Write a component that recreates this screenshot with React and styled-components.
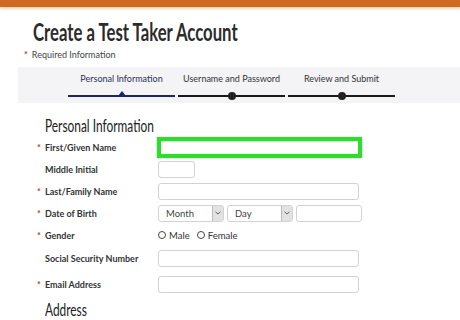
import React from "react";
import styled, { createGlobalStyle } from "styled-components";

const Global = createGlobalStyle`
  html, body { margin: 0; padding: 0; background: #fff; overflow: hidden; }
  body { width: 460px; height: 320px; font-family: Lato, "Open Sans", sans-serif; color: #333; }
`;

const Page = styled.div`
  width: 460px;
  height: 320px;
  overflow: hidden;
  display: flex;
  flex-direction: column;
`;

const TopBar = styled.div`
  height: 7px;
  background: #cf6a22;
  flex: none;
  box-shadow: 0 2px 3px #f6d9c3;
`;

const Header = styled.header`
  padding: 11px 0 0 33px;
`;

const Condensed = styled.span`
  display: inline-block;
  white-space: nowrap;
  transform: scaleX(${(p) => p.$sx});
  transform-origin: left center;
`;

const Title = styled.h1`
  margin: 0;
  font-family: Lato, "Open Sans", sans-serif;
  font-weight: 700;
  font-size: 24px;
  line-height: 28px;
  color: #2b2b2b;
`;

const Required = styled.div`
  margin: 3px 0 0 -9px;
  font-size: 9px;
  line-height: 12px;
  color: #444;
  display: flex;
  gap: 4px;
`;

const Star = styled.span`
  color: #b03a3a;
  font-weight: 700;
`;

const Stepper = styled.nav`
  margin: 6px 0 0 18px;
  height: 36px;
  background: #f4f4f6;
  display: flex;
  gap: 3px;
  padding-left: 50px;
`;

const Step = styled.div`
  width: 107px;
  display: flex;
  flex-direction: column;
  align-items: center;
`;

const StepLabel = styled.div`
  margin-top: 6px;
  height: 12px;
  font-size: 9px;
  line-height: 12px;
  white-space: nowrap;
  color: ${(p) => (p.$active ? "#2d2d5e" : "#333")};
`;

const StepLine = styled.div`
  position: relative;
  margin-top: 10px;
  width: 100%;
  height: 2px;
  background: ${(p) => (p.$active ? "#1e2466" : "#1a1a1a")};
`;

const Dot = styled.span`
  position: absolute;
  left: 50%;
  top: 50%;
  width: 8px;
  height: 8px;
  margin: -4px 0 0 -4px;
  border-radius: 50%;
  background: #222;
`;

const Tri = styled.span`
  position: absolute;
  left: 50%;
  bottom: 1px;
  margin-left: -4px;
  width: 0;
  height: 0;
  border-left: 4px solid transparent;
  border-right: 4px solid transparent;
  border-bottom: 5px solid #1e2466;
`;

const Form = styled.section`
  padding: 13px 0 0 35px;
  display: flex;
  flex-direction: column;
`;

const SectionTitle = styled.h2`
  margin: ${(p) => p.$mt || 0}px 0 0 10px;
  font-family: Lato, "Open Sans", sans-serif;
  font-weight: 400;
  font-size: 17.5px;
  line-height: 20px;
  color: #222;
`;

const Row = styled.div`
  display: grid;
  grid-template-columns: 10px 113px 1fr;
  align-items: center;
  height: ${(p) => p.$h || 22}px;
`;

const Label = styled.label`
  font-size: 9px;
  font-weight: 700;
  color: #333;
  white-space: nowrap;
`;

const RowStar = styled.span`
  color: #b03a3a;
  font-size: 9px;
  font-weight: 700;
  padding-left: 2px;
`;

const Input = styled.div`
  box-sizing: border-box;
  width: ${(p) => p.$w}px;
  height: 17px;
  border: 1px solid #d2d2d2;
  border-radius: 3px;
  background: #fff;
`;

const Focused = styled.div`
  box-sizing: border-box;
  width: 205px;
  height: 21px;
  margin-left: -1px;
  border: 4px solid #2fdc2f;
  box-shadow: 0 0 2px #7ef07e;
  background: #fff;
`;

const Controls = styled.div`
  display: flex;
  gap: 3px;
  align-items: center;
`;

const Select = styled.div`
  box-sizing: border-box;
  width: 66px;
  height: 17px;
  border: 1px solid #d2d2d2;
  border-radius: 3px;
  display: flex;
  align-items: stretch;
  font-size: 9.5px;
  color: #444;
`;

const SelectText = styled.span`
  flex: 1;
  padding-left: 7px;
  line-height: 15px;
`;

const Arrow = styled.span`
  width: 10px;
  background: #e2e2e2;
  border-left: 1px solid #bcbcbc;
  display: flex;
  align-items: center;
  justify-content: center;
`;

const Radios = styled.div`
  display: flex;
  align-items: center;
  gap: 7px;
  font-size: 9.5px;
  color: #333;
`;

const Radio = styled.span`
  display: flex;
  align-items: center;
  gap: 3px;
`;

const Circle = styled.span`
  box-sizing: border-box;
  width: 8px;
  height: 8px;
  border: 1px solid #444;
  border-radius: 50%;
`;

const Chevron = () => (
  <svg width="6" height="4" viewBox="0 0 6 4">
    <path d="M0.5 0.8 L3 3 L5.5 0.8" fill="none" stroke="#555" strokeWidth="0.9" />
  </svg>
);

const Field = ({ req, label, h, children }) => (
  <Row $h={h}>
    {req ? <RowStar>*</RowStar> : <span />}
    <Label>{label}</Label>
    {children}
  </Row>
);

export default function App() {
  return (
    <Page>
      <Global />
      <TopBar />
      <Header>
        <Title>
          <Condensed $sx={0.696}>Create a Test Taker Account</Condensed>
        </Title>
        <Required>
          <Star>*</Star>
          <span>Required Information</span>
        </Required>
      </Header>
      <Stepper>
        <Step>
          <StepLabel $active>Personal Information</StepLabel>
          <StepLine $active>
            <Tri />
          </StepLine>
        </Step>
        <Step>
          <StepLabel>Username and Password</StepLabel>
          <StepLine>
            <Dot />
          </StepLine>
        </Step>
        <Step>
          <StepLabel>Review and Submit</StepLabel>
          <StepLine>
            <Dot />
          </StepLine>
        </Step>
      </Stepper>
      <Form>
        <SectionTitle>
          <Condensed $sx={0.68}>Personal Information</Condensed>
        </SectionTitle>
        <Field req label="First/Given Name">
          <Focused />
        </Field>
        <Field label="Middle Initial">
          <Input $w={37} />
        </Field>
        <Field req label="Last/Family Name">
          <Input $w={201} />
        </Field>
        <Field req label="Date of Birth">
          <Controls>
            <Select>
              <SelectText>Month</SelectText>
              <Arrow><Chevron /></Arrow>
            </Select>
            <Select>
              <SelectText>Day</SelectText>
              <Arrow><Chevron /></Arrow>
            </Select>
            <Input $w={66} />
          </Controls>
        </Field>
        <Field req label="Gender">
          <Radios>
            <Radio><Circle />Male</Radio>
            <Radio><Circle />Female</Radio>
          </Radios>
        </Field>
        <Field label="Social Security Number" h={25}>
          <Input $w={201} />
        </Field>
        <Field req label="Email Address" h={27}>
          <Input $w={201} />
        </Field>
        <SectionTitle $mt={2}>
          <Condensed $sx={0.68}>Address</Condensed>
        </SectionTitle>
      </Form>
    </Page>
  );
}
